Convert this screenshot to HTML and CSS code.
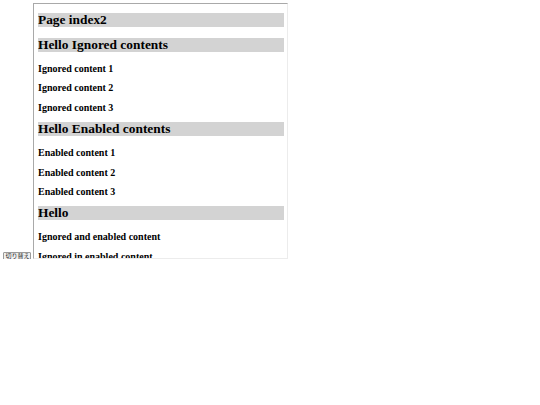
FILE: index.html
```html
<!DOCTYPE html>
<html lang="ja">
<head>
<meta charset="utf-8">
<title>index</title>
<link rel="stylesheet" href="styles.css">
</head>
<body>
<div class="row">
  <button class="toggle" type="button">切り替え</button>
  <div class="frame">
    <div class="doc">
      <h2 class="band first">Page index2</h2>
      <h2 class="band">Hello Ignored contents</h2>
      <h4 class="item">Ignored content 1</h4>
      <h4 class="item">Ignored content 2</h4>
      <h4 class="item">Ignored content 3</h4>
      <h2 class="band">Hello Enabled contents</h2>
      <h4 class="item">Enabled content 1</h4>
      <h4 class="item">Enabled content 2</h4>
      <h4 class="item">Enabled content 3</h4>
      <h2 class="band">Hello</h2>
      <h4 class="item">Ignored and enabled content</h4>
      <h4 class="item">Ignored in enabled content</h4>
    </div>
  </div>
</div>
</body>
</html>
```
FILE: styles.css
```css
html, body {
  background: #ffffff;
}
body {
  margin: 3px;
  font-family: "Liberation Serif", "Noto Sans CJK JP", serif;
  color: #000;
}
.row {
  display: flex;
  align-items: flex-end;
  gap: 2px;
}
.toggle {
  margin: 0 0 -1px 0;
  padding: 0 1.5px;
  font-family: "Noto Sans CJK JP", "Noto Sans", sans-serif;
  font-size: 6px;
  line-height: 6px;
  height: 8px;
  width: 28px;
  color: #222;
  background: #efefef;
  border: 1px solid #9a9a9a;
  border-radius: 1px;
  box-sizing: border-box;
  white-space: nowrap;
  overflow: hidden;
}
.frame {
  width: 255px;
  height: 256px;
  box-sizing: border-box;
  border: 1px solid;
  border-color: #a9a9a9 #ececec #ececec #a9a9a9;
  overflow: hidden;
  background: #fff;
}
.doc {
  padding: 0 3px 0 4px;
  display: flow-root;
}
.band {
  margin: 7.5px 0 10.5px;
  font-size: 13.4px;
  line-height: 14.5px;
  font-weight: bold;
  background: #d3d3d3;
}
.band.first {
  margin-top: 8.7px;
}
.item {
  margin: 7.5px 0;
  font-size: 10px;
  line-height: 12.2px;
  font-weight: bold;
}
```
